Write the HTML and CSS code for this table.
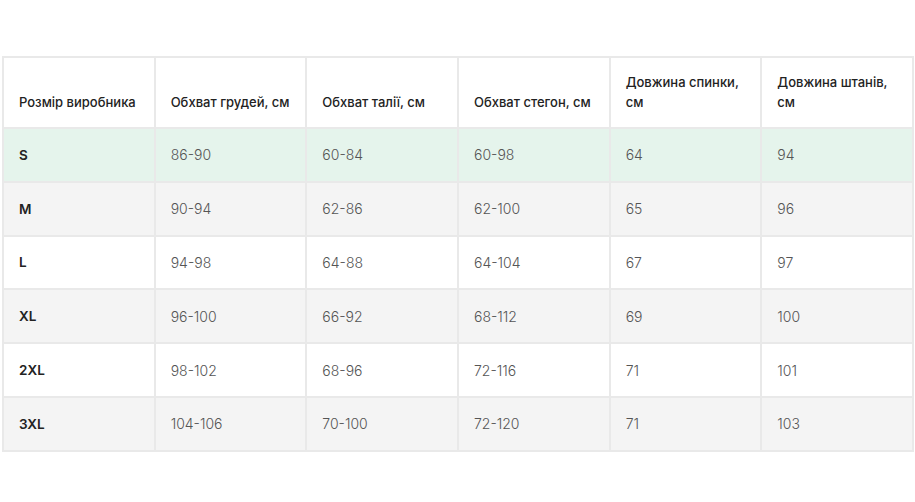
FILE: index.html
```html
<!DOCTYPE html>
<html lang="uk">
<head>
<meta charset="utf-8">
<link rel="stylesheet" href="styles.css">
</head>
<body>
<table class="sizes">
  <thead>
    <tr>
      <th>Розмір виробника</th>
      <th>Обхват грудей, см</th>
      <th>Обхват талії, см</th>
      <th>Обхват стегон, см</th>
      <th>Довжина спинки, см</th>
      <th>Довжина штанів, см</th>
    </tr>
  </thead>
  <tbody>
    <tr class="active"><th>S</th><td>86-90</td><td>60-84</td><td>60-98</td><td>64</td><td>94</td></tr>
    <tr class="alt"><th>M</th><td>90-94</td><td>62-86</td><td>62-100</td><td>65</td><td>96</td></tr>
    <tr><th>L</th><td>94-98</td><td>64-88</td><td>64-104</td><td>67</td><td>97</td></tr>
    <tr class="alt"><th>XL</th><td>96-100</td><td>66-92</td><td>68-112</td><td>69</td><td>100</td></tr>
    <tr><th>2XL</th><td>98-102</td><td>68-96</td><td>72-116</td><td>71</td><td>101</td></tr>
    <tr class="alt"><th>3XL</th><td>104-106</td><td>70-100</td><td>72-120</td><td>71</td><td>103</td></tr>
  </tbody>
</table>
</body>
</html>
```
FILE: styles.css
```css
html, body {
  margin: 0;
  padding: 0;
  background: #fff;
}
body {
  padding: 56px 0 0 2px;
  font-family: Inter, "Noto Sans", sans-serif;
}
.sizes {
  border-collapse: collapse;
  table-layout: fixed;
  width: 912px;
}
.sizes th, .sizes td {
  border: 2px solid #e9e9e9;
  text-align: left;
  padding: 0 14px 0 15px;
}
.sizes thead th {
  height: 54px;
  vertical-align: bottom;
  padding-bottom: 15px;
  font-size: 13px;
  font-weight: 500;
  line-height: 20px;
  color: #222;
}
.sizes tbody tr {
  height: 53.8px;
}
.sizes tbody th {
  font-size: 13.5px;
  font-weight: 600;
  color: #222;
}
.sizes tbody td {
  font-size: 14px;
  font-weight: 300;
  color: #555;
}
.sizes tr.active {
  background: #e5f4ec;
}
.sizes tr.alt {
  background: #f4f4f4;
}
```
